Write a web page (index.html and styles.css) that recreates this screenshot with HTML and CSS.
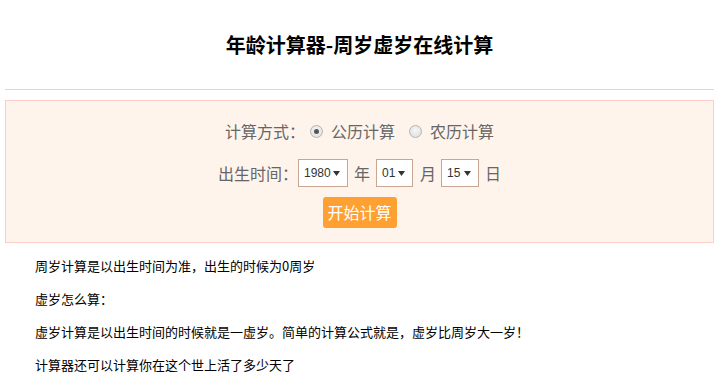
FILE: index.html
```html
<!DOCTYPE html>
<html lang="zh-CN">
<head>
<meta charset="utf-8">
<title>年龄计算器-周岁虚岁在线计算</title>
<link rel="stylesheet" href="styles.css">
</head>
<body>
<div class="page">
  <h1 class="title">年龄计算器-周岁虚岁在线计算</h1>
  <div class="rule"></div>
  <div class="calc">
    <div class="row row-mode">
      <span class="label">计算方式：</span>
      <label class="opt"><input type="radio" name="mode" class="radio" checked><span>公历计算</span></label>
      <label class="opt"><input type="radio" name="mode" class="radio"><span>农历计算</span></label>
    </div>
    <div class="row row-date">
      <span class="label">出生时间：</span>
      <select class="sel sel-year"><option>1980</option></select>
      <span class="unit">年</span>
      <select class="sel sel-month"><option>01</option></select>
      <span class="unit unit-month">月</span>
      <select class="sel sel-day"><option>15</option></select>
      <span class="unit">日</span>
    </div>
    <div class="row row-btn">
      <button class="btn" type="button">开始计算</button>
    </div>
  </div>
  <div class="notes">
    <p>周岁计算是以出生时间为准，出生的时候为0周岁</p>
    <p>虚岁怎么算：</p>
    <p>虚岁计算是以出生时间的时候就是一虚岁。简单的计算公式就是，虚岁比周岁大一岁！</p>
    <p>计算器还可以计算你在这个世上活了多少天了</p>
  </div>
</div>
</body>
</html>
```
FILE: styles.css
```css
html, body {
  margin: 0;
  padding: 0;
  background: #fff;
}
body {
  font-family: "Noto Sans CJK SC", "Noto Sans", "Liberation Sans", sans-serif;
  color: #000;
}
.page {
  padding: 0 5px;
}
.title {
  margin: 0;
  padding-top: 30px;
  height: 30px;
  line-height: 30px;
  font-size: 20px;
  font-weight: bold;
  text-align: center;
  color: #000;
}
.rule {
  margin-top: 29px;
  height: 1px;
  background: #d9d9d9;
}
.calc {
  margin-top: 10px;
  border: 1px solid #ffcccc;
  background: #fff4eb;
  padding: 18px 0 14px;
  color: #666;
  font-size: 16px;
}
.row {
  display: flex;
  justify-content: center;
  align-items: center;
}
.row-mode {
  height: 24px;
  line-height: 24px;
}
.row-date {
  margin-top: 16px;
  height: 28px;
  line-height: 28px;
}
.row-btn {
  margin-top: 10px;
}
.label {
  width: 80px;
  white-space: nowrap;
}
.opt {
  display: flex;
  align-items: center;
  margin-right: 9px;
}
.opt:last-child {
  margin-right: 0;
}
.radio {
  -webkit-appearance: none;
  appearance: none;
  width: 13px;
  height: 13px;
  margin: 0 8px 0 5px;
  border-radius: 50%;
  border: 1px solid #b4b4b4;
  background: radial-gradient(circle at 50% 40%, #f6f6f6 0%, #dcdcdc 100%);
  box-sizing: border-box;
  position: relative;
}
.radio:checked::after {
  content: "";
  position: absolute;
  left: 3px;
  top: 3px;
  width: 5px;
  height: 5px;
  border-radius: 50%;
  background: #555;
}
.sel {
  -webkit-appearance: none;
  appearance: none;
  height: 28px;
  box-sizing: border-box;
  border: 1px solid #c9a592;
  border-radius: 0;
  background-color: #fff;
  background-image: url("data:image/svg+xml;utf8,<svg xmlns='http://www.w3.org/2000/svg' width='7' height='5'><polygon points='0,0 7,0 3.5,5' fill='%23333'/></svg>");
  background-repeat: no-repeat;
  background-position: right 7px center;
  font-family: "Liberation Sans", Arial, sans-serif;
  font-size: 12px;
  color: #333;
  padding: 0 0 0 5px;
  margin: 0;
}
.sel-year { width: 50px; }
.sel-month { width: 37px; margin-left: 6px; }
.sel-day { width: 38px; margin-left: 5px; }
.unit {
  margin-left: 6px;
}
.unit-month {
  margin-left: 7px;
}
.btn {
  width: 74px;
  height: 31px;
  border: none;
  border-radius: 3px;
  background: #ffa033;
  color: #fff;
  font-family: "Noto Sans CJK SC", sans-serif;
  font-size: 16px;
  padding: 0;
  line-height: 31px;
}
.notes {
  padding: 13px 30px 0;
  font-size: 13px;
  color: #000;
}
.notes p {
  margin: 0 0 13px;
  line-height: 20px;
}
```
